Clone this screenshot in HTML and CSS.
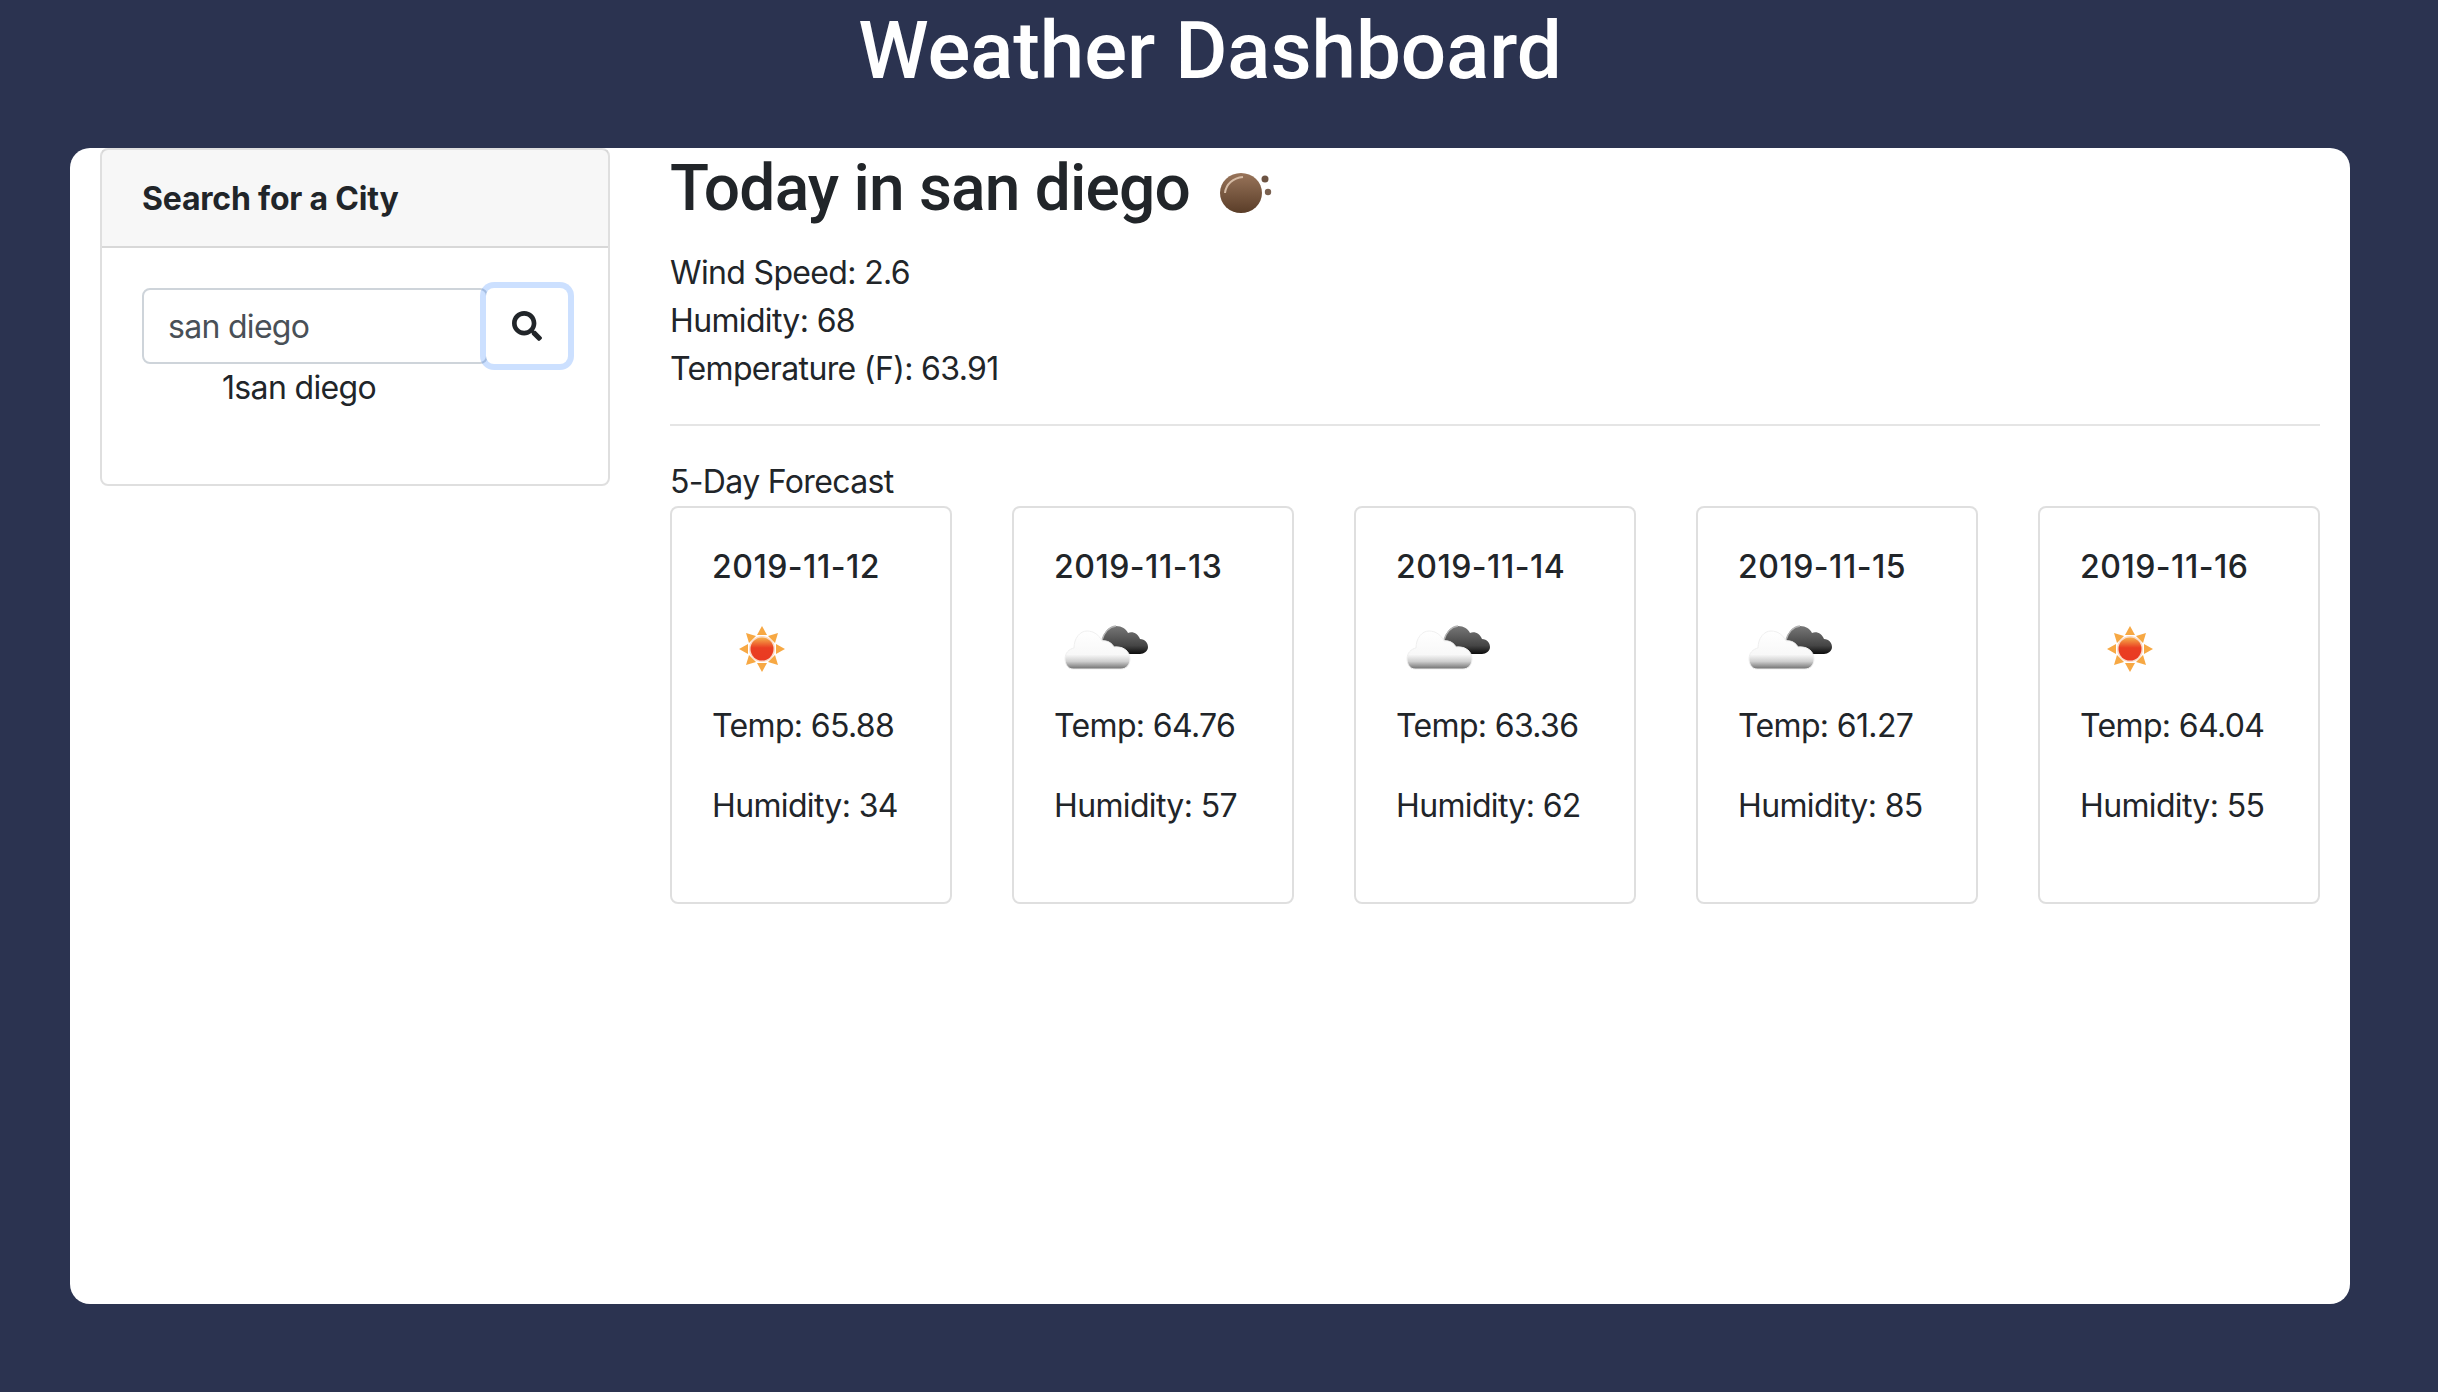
FILE: index.html

```html
<!DOCTYPE html>
<html>
	<head>
		<meta http-equiv="Content-Type" content="text/html; charset=utf-8" />
		<title>Weather Dashboard</title>
		<link rel="stylesheet" href="styles.css">
	</head>
	<body>
		<svg class="defs" width="0" height="0">
			<defs>
				<linearGradient id="sunDisc" x1="0" y1="0" x2="0" y2="1">
					<stop offset="0" stop-color="#f6b04a"/>
					<stop offset="0.45" stop-color="#ea3e22"/>
					<stop offset="1" stop-color="#e93a22"/>
				</linearGradient>
				<linearGradient id="cloudWhite" x1="0" y1="0" x2="0" y2="1">
					<stop offset="0" stop-color="#ffffff"/>
					<stop offset="0.62" stop-color="#f8f8f8"/>
					<stop offset="0.8" stop-color="#cfcfcf"/>
					<stop offset="1" stop-color="#6f6f6f"/>
				</linearGradient>
				<linearGradient id="cloudDark" x1="0" y1="0" x2="0" y2="1">
					<stop offset="0" stop-color="#777777"/>
					<stop offset="0.7" stop-color="#454545"/>
					<stop offset="1" stop-color="#0c0c0c"/>
				</linearGradient>
				<linearGradient id="ball" x1="0" y1="0" x2="0" y2="1">
					<stop offset="0" stop-color="#98745a"/>
					<stop offset="1" stop-color="#5a3d28"/>
				</linearGradient>
				<symbol id="sun" viewBox="0 8 100 92">
					<g fill="#f7a843">
						<polygon points="50,24 45,33 55,33"/>
						<polygon points="50,70 45,61 55,61"/>
						<polygon points="27,47 36,42 36,52"/>
						<polygon points="73,47 64,42 64,52"/>
						<polygon points="34,31 44,34 37,41"/>
						<polygon points="66,31 56,34 63,41"/>
						<polygon points="34,63 44,60 37,53"/>
						<polygon points="66,63 56,60 63,53"/>
					</g>
					<circle cx="50" cy="47" r="13" fill="#fbd9c4"/>
					<circle cx="50" cy="47" r="11.5" fill="url(#sunDisc)"/>
				</symbol>
				<symbol id="clouds" viewBox="0 0 100 92">
					<path fill="url(#cloudDark)" d="M48 30C50 22 55 16 62 16C68 16 72 19 74 23C79 21 84 24 86 29C91 29 94 33 94 37C94 41 90 44 86 44L68 44C62 40 56 33 48 30Z"/>
					<path fill="none" stroke="#b5b5b5" stroke-width="1.5" d="M48 30C50 23 55 17 62 16"/>
					<path fill="url(#cloudWhite)" stroke="#efefef" stroke-width="1" d="M19 59C14 59 11 54 11 49C11 43 15 39 20 38C20 28 26 21 33 21C40 21 45 25 48 31C53 30 58 33 60 37C69 36 76 41 76 49C76 55 72 59 67 59Z"/>
				</symbol>
				<symbol id="ballIcon" viewBox="0 -5 80 76">
					<ellipse cx="30" cy="38" rx="21" ry="20" fill="url(#ball)"/>
					<path fill="none" stroke="#d6bca6" stroke-width="2" d="M14 38c1-9 8-15 18-16"/>
					<circle cx="54" cy="24" r="3.5" fill="#6d5443"/>
					<circle cx="57" cy="37" r="3.2" fill="#7a6150"/>
				</symbol>
			</defs>
		</svg>
		<h1 class="site-title">Weather Dashboard</h1>
		<div class="panel">
			<div class="sidebar">
				<div class="box">
					<div class="box-header">Search for a City</div>
					<div class="box-body">
						<div class="search-row">
							<input class="search-input" type="text" value="san diego">
							<button class="search-btn" type="button">
								<svg class="search-icon" viewBox="0 0 512 512"><path fill="#212529" d="M505 442.7L405.3 343c-4.5-4.5-10.6-7-17-7H372c27.6-35.3 44-79.7 44-128C416 93.1 322.9 0 208 0S0 93.1 0 208s93.1 208 208 208c48.3 0 92.7-16.4 128-44v16.3c0 6.4 2.5 12.5 7 17l99.7 99.7c9.4 9.4 24.6 9.4 33.9 0l28.3-28.3c9.4-9.4 9.4-24.6.1-34zM208 336c-70.7 0-128-57.2-128-128 0-70.7 57.2-128 128-128 70.7 0 128 57.2 128 128 0 70.7-57.2 128-128 128z"/></svg>
							</button>
						</div>
						<ul class="history">
							<li>1san diego</li>
						</ul>
					</div>
				</div>
			</div>
			<div class="main">
				<h2 class="today-title">Today in san diego <svg class="today-icon"><use href="#ballIcon"/></svg></h2>
				<div class="today-line">Wind Speed: 2.6</div>
				<div class="today-line">Humidity: 68</div>
				<div class="today-line">Temperature (F): 63.91</div>
				<hr class="divider">
				<div class="today-line">5-Day Forecast</div>
				<div class="forecast">
					<div class="day">
						<h5 class="day-date">2019-11-12</h5>
						<svg class="day-icon"><use href="#sun"/></svg>
						<p class="day-text">Temp: 65.88</p>
						<p class="day-text">Humidity: 34</p>
					</div>
					<div class="day">
						<h5 class="day-date">2019-11-13</h5>
						<svg class="day-icon"><use href="#clouds"/></svg>
						<p class="day-text">Temp: 64.76</p>
						<p class="day-text">Humidity: 57</p>
					</div>
					<div class="day">
						<h5 class="day-date">2019-11-14</h5>
						<svg class="day-icon"><use href="#clouds"/></svg>
						<p class="day-text">Temp: 63.36</p>
						<p class="day-text">Humidity: 62</p>
					</div>
					<div class="day">
						<h5 class="day-date">2019-11-15</h5>
						<svg class="day-icon"><use href="#clouds"/></svg>
						<p class="day-text">Temp: 61.27</p>
						<p class="day-text">Humidity: 85</p>
					</div>
					<div class="day">
						<h5 class="day-date">2019-11-16</h5>
						<svg class="day-icon"><use href="#sun"/></svg>
						<p class="day-text">Temp: 64.04</p>
						<p class="day-text">Humidity: 55</p>
					</div>
				</div>
			</div>
		</div>
	</body>
</html>
```

FILE: styles.css

```css
* {box-sizing:border-box;}
html, body {height:100%;}
body {margin:0;padding-right:18px;background:#2b3350;color:#212529;font:32px/48px Inter, "Liberation Sans", sans-serif;letter-spacing:-.65px;overflow:hidden;}
.defs {display:block;height:0;}
.site-title {margin:0 0 49px;padding-top:3px;font-family:Roboto, "Liberation Sans", sans-serif;font-size:80px;line-height:96px;font-weight:500;letter-spacing:-.05px;color:#fff;text-align:center;}
.panel {display:grid;grid-template-columns:510px 1650px;column-gap:60px;height:1156px;margin:0 70px;padding:0 30px;background:#fff;border-radius:20px;}
.box {border:2px solid rgba(0,0,0,.125);border-radius:8px;}
.box-header {padding:25px 40px 23px;background:rgba(0,0,0,.03);border-bottom:2px solid rgba(0,0,0,.125);font-weight:700;letter-spacing:-.2px;}
.box-body {padding:40px;}
.search-row {display:flex;}
.search-input {width:346px;height:76px;padding:12px 24px;border:2px solid #ced4da;border-radius:8px;background:#fff;color:#495057;font:32px/48px Inter, "Liberation Sans", sans-serif;letter-spacing:-.7px;}
.search-btn {position:relative;display:flex;align-items:center;justify-content:center;width:82px;height:76px;margin-left:-2px;padding:0;border:0;border-radius:8px;background:#fff;box-shadow:0 0 0 6px rgba(0,100,255,.2);}
.search-icon {width:30px;height:30px;}
.history {margin:0 0 32px;padding:0 0 0 80px;list-style:none;}
.today-title {margin:0 0 22px;padding-top:2px;font-family:Roboto, "Liberation Sans", sans-serif;font-size:64px;line-height:77px;font-weight:500;letter-spacing:-.8px;}
.today-icon {width:80px;height:76px;vertical-align:top;margin-left:6px;filter:blur(.6px);}
.divider {margin:31px 0 32px;border:0;border-top:2px solid rgba(0,0,0,.1);}
.forecast {display:flex;justify-content:space-between;}
.day {width:282px;height:398px;padding:40px;border:2px solid rgba(0,0,0,.125);border-radius:8px;}
.day-date {margin:0 0 24px;font-size:32px;line-height:38px;font-weight:500;letter-spacing:.5px;}
.day-icon {display:block;width:100px;height:92px;filter:blur(.7px);}
.day-text {margin:0 0 32px;}
```
